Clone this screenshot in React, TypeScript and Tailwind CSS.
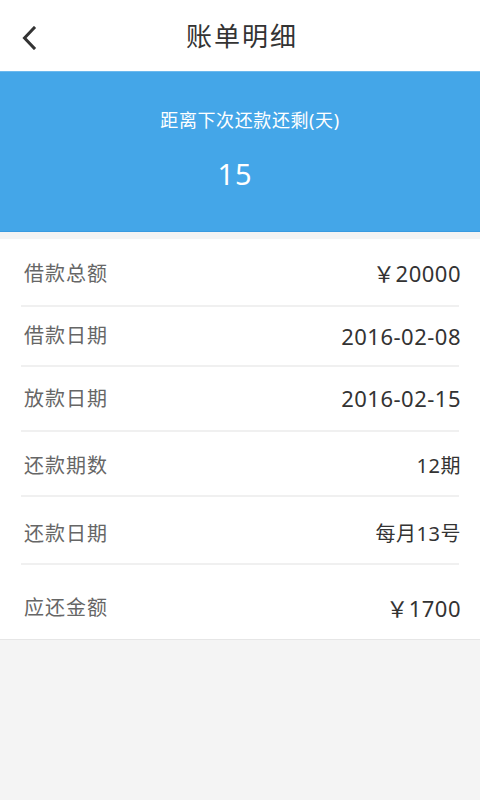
import React from 'react';

const rows = [
  { label: '借款总额', value: '￥20000', h: 'h-[66px]', pt: 'pt-[3px]', size: 'text-[22px]' },
  { label: '借款日期', value: '2016-02-08', h: 'h-[58px]', pt: 'pt-0', size: 'text-[22px]' },
  { label: '放款日期', value: '2016-02-15', h: 'h-[63px]', pt: 'pt-0', size: 'text-[22px]' },
  { label: '还款期数', value: '12期', h: 'h-[63px]', pt: 'pt-[4px]', size: 'text-[20px]' },
  { label: '还款日期', value: '每月13号', h: 'h-[66px]', pt: 'pt-[8px]', size: 'text-[20px]' },
  { label: '应还金额', value: '￥1700', h: 'h-[74px]', pt: 'pt-[12px]', size: 'text-[22px]' },
];

export default function App() {
  return (
    <div className="min-h-[800px] w-[480px] bg-[#f4f4f4] font-['Noto_Sans','Noto_Sans_CJK_SC',sans-serif]">
      {/* header */}
      <div className="relative flex h-[71px] items-center justify-center bg-white">
        <button className="absolute left-[19px] top-[24px] flex h-[28px] w-[20px] items-center justify-center">
          <svg width="16" height="24" viewBox="0 0 16 24" fill="none">
            <path d="M13 2 L3.5 12 L13 22" stroke="#333" strokeWidth="3" strokeLinecap="square" />
          </svg>
        </button>
        <h1 className="pl-[4px] pt-[2px] text-[26px] tracking-[2px] text-[#333]">账单明细</h1>
      </div>

      {/* countdown */}
      <div className="flex h-[161px] flex-col items-center border-t border-b border-t-[#6cb9ee] border-b-[#3a9be0] bg-[#44a6e8] text-white">
        <p className="mt-[35px] pl-[20px] text-[18px] tracking-[0.6px]">距离下次还款还剩(天)</p>
        <p className="mt-[25px] pr-[10px] text-[29px] leading-none tracking-[1px]">15</p>
      </div>

      <div className="h-[7px]" />

      {/* details */}
      <div className="border-b border-[#e6e6e6] bg-white">
        {rows.map((r, i) => (
          <React.Fragment key={r.label}>
            <div className={`flex ${r.h} ${r.pt} items-center justify-between pl-[24px] pr-[19px]`}>
              <span className="text-[20px] tracking-[1px] text-[#666]">{r.label}</span>
              <span className={`${r.size} tracking-[0.5px] text-[#333]`}>{r.value}</span>
            </div>
            {i < rows.length - 1 && <div className="mx-[21px] h-[2px] bg-[#f0f0f0]" />}
          </React.Fragment>
        ))}
      </div>
    </div>
  );
}
